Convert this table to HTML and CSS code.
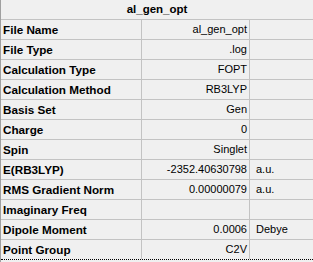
FILE: index.html
```html
<!DOCTYPE html>
<html lang="en">
<head>
  <meta charset="UTF-8">
  <title>al_gen_opt - Summary</title>
  <link rel="stylesheet" href="styles.css">
</head>
<body>
  <div class="summary">
    <div class="title">al_gen_opt</div>
    <div class="row"><div class="key">File Name</div><div class="val">al_gen_opt</div><div class="unit"></div></div>
    <div class="row"><div class="key">File Type</div><div class="val">.log</div><div class="unit"></div></div>
    <div class="row"><div class="key">Calculation Type</div><div class="val">FOPT</div><div class="unit"></div></div>
    <div class="row"><div class="key">Calculation Method</div><div class="val">RB3LYP</div><div class="unit"></div></div>
    <div class="row"><div class="key">Basis Set</div><div class="val">Gen</div><div class="unit"></div></div>
    <div class="row"><div class="key">Charge</div><div class="val">0</div><div class="unit"></div></div>
    <div class="row"><div class="key">Spin</div><div class="val">Singlet</div><div class="unit"></div></div>
    <div class="row"><div class="key">E(RB3LYP)</div><div class="val">-2352.40630798</div><div class="unit">a.u.</div></div>
    <div class="row"><div class="key">RMS Gradient Norm</div><div class="val">0.00000079</div><div class="unit">a.u.</div></div>
    <div class="row"><div class="key">Imaginary Freq</div><div class="val"></div><div class="unit"></div></div>
    <div class="row"><div class="key">Dipole Moment</div><div class="val">0.0006</div><div class="unit">Debye</div></div>
    <div class="row last"><div class="key">Point Group</div><div class="val">C2V</div><div class="unit"></div></div>
  </div>
</body>
</html>
```

FILE: styles.css
```css
body {
  margin: 0;
  background-color: #f0f0f0;
  font-family: "Liberation Sans", Arial, sans-serif;
  color: #000;
}
.summary {
  width: 313px;
  height: 262px;
  box-sizing: border-box;
  border-left: 1px solid #a0a0a0;
  background-color: #f0f0f0;
}
.title {
  height: 19px;
  line-height: 19px;
  border-bottom: 1px solid #c3c3c3;
  text-align: center;
  font-size: 11.5px;
  font-weight: bold;
}
.row {
  display: flex;
  height: 19px;
  line-height: 19px;
  border-bottom: 1px solid #c3c3c3;
}
.row.last {
  border-bottom: 1px dotted #000;
}
.key {
  width: 141px;
  flex: none;
  padding-left: 2px;
  box-sizing: border-box;
  border-right: 1px solid #c3c3c3;
  font-size: 11.7px;
  font-weight: bold;
  white-space: nowrap;
}
.val {
  width: 108px;
  flex: none;
  padding-right: 2px;
  box-sizing: border-box;
  border-right: 1px solid #c3c3c3;
  text-align: right;
  font-size: 11px;
  white-space: nowrap;
}
.unit {
  flex: 1;
  padding-left: 6px;
  font-size: 11px;
}
```
